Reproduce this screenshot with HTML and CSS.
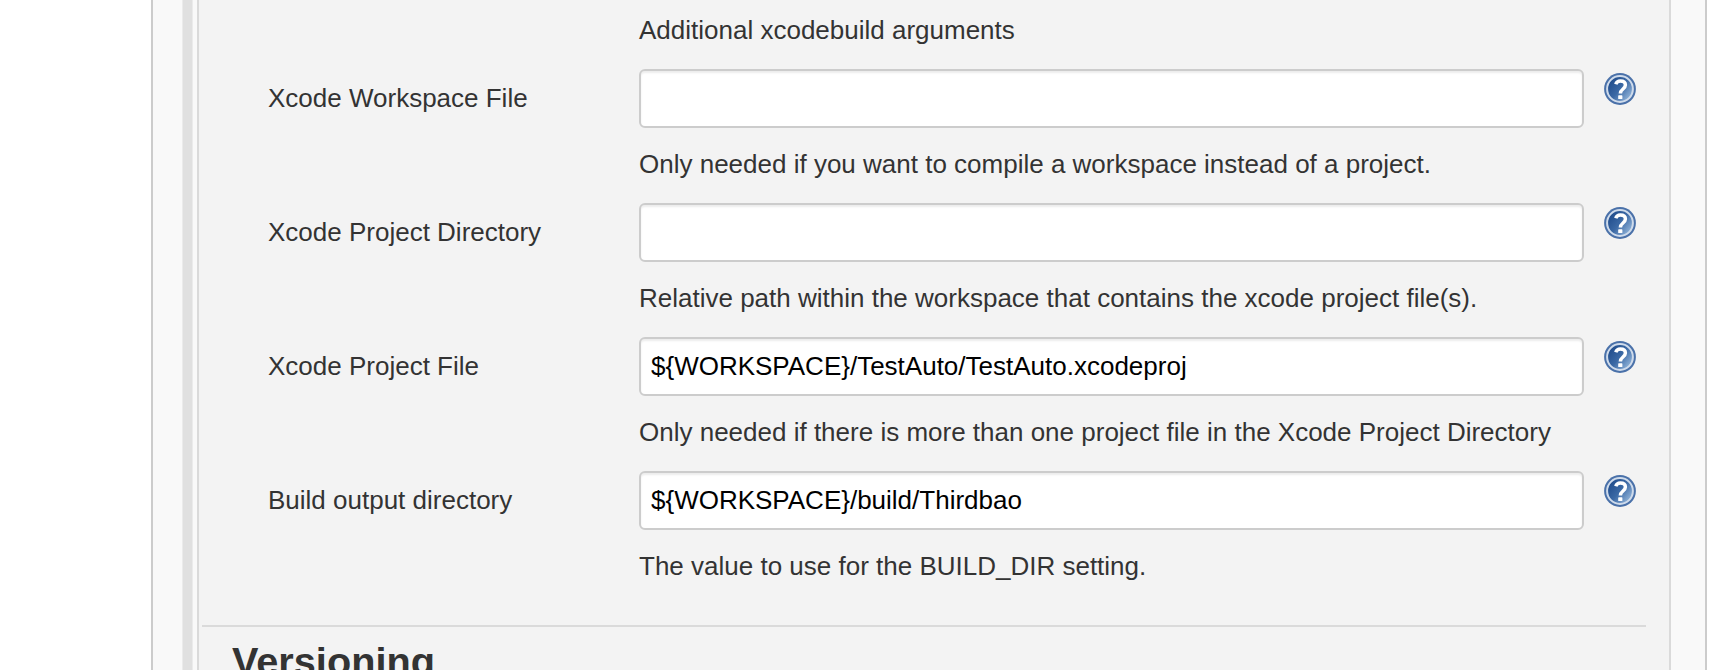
FILE: index.html
```html
<!DOCTYPE html>
<html lang="en">
<head>
<meta charset="utf-8">
<title>Xcode build configuration</title>
<link rel="stylesheet" href="styles.css">
</head>
<body>
<svg width="0" height="0" class="defs" aria-hidden="true">
  <defs>
    <linearGradient id="disc" x1="0" y1="0.1" x2="1" y2="0.9">
      <stop offset="0.15" stop-color="#24508f"/><stop offset="0.5" stop-color="#3b69a5"/><stop offset="0.9" stop-color="#8fb2d8"/>
    </linearGradient>
    <symbol id="help" viewBox="0 0 32 32">
      <circle cx="16" cy="16" r="15.9" fill="#4a71a9"/>
      <circle cx="16" cy="16" r="12.9" fill="url(#disc)" stroke="#cfdbeb" stroke-width="2"/>
      <path d="M11.8 11.3C12.500 8.900 14 8 16.300 8c3.100 0 5.100 1.400 5.100 4.100 0 4-5 3.900-5 8.400" fill="none" stroke="#fff" stroke-width="3.500"/>
      <rect x="14.200" y="22.300" width="4.200" height="3.700" rx="0.600" fill="#fff"/>
    </symbol>
  </defs>
</svg>
<main class="config">
  <div class="drag-handle"></div>
  <section class="panel">
    <p class="description intro">Additional xcodebuild arguments</p>
    <div class="row">
      <label class="label" for="workspace">Xcode Workspace File</label>
      <input class="field" id="workspace" type="text">
      <svg class="help"><use href="#help"/></svg>
      <p class="description">Only needed if you want to compile a workspace instead of a project.</p>
    </div>
    <div class="row">
      <label class="label" for="directory">Xcode Project Directory</label>
      <input class="field" id="directory" type="text">
      <svg class="help"><use href="#help"/></svg>
      <p class="description">Relative path within the workspace that contains the xcode project file(s).</p>
    </div>
    <div class="row">
      <label class="label" for="project">Xcode Project File</label>
      <input class="field" id="project" type="text" value="${WORKSPACE}/TestAuto/TestAuto.xcodeproj">
      <svg class="help"><use href="#help"/></svg>
      <p class="description">Only needed if there is more than one project file in the Xcode Project Directory</p>
    </div>
    <div class="row">
      <label class="label" for="output">Build output directory</label>
      <input class="field" id="output" type="text" value="${WORKSPACE}/build/Thirdbao">
      <svg class="help"><use href="#help"/></svg>
      <p class="description">The value to use for the BUILD_DIR setting.</p>
    </div>
    <h2 class="heading">Versioning</h2>
  </section>
</main>
</body>
</html>
```
FILE: styles.css
```css
* { box-sizing: border-box; }
body {
  margin: 0;
  height: 670px;
  overflow: hidden;
  background: #fff;
  color: #333;
  font: 26px/30px "Liberation Sans", Arial, sans-serif;
}
.defs { position: absolute; }
.config {
  display: flex;
  width: 1556px;
  height: 670px;
  margin-left: 151px;
  padding: 0 34px 0 29px;
  border: solid #ccc;
  border-width: 0 2px;
  background: #f9f9f9;
}
.drag-handle {
  width: 11px;
  margin-right: 4px;
  border: solid #ebebeb;
  border-width: 0 1px;
  background: #e0e0e0;
}
.panel {
  flex: 1;
  overflow: hidden;
  padding: 0 23px 0 3px;
  border: solid #dadada;
  border-width: 0 2px;
  background: #f3f3f3;
}
.description { margin: 0; white-space: nowrap; }
.intro { height: 69px; padding: 15px 0 0 437px; }
.row {
  display: grid;
  grid-template-columns: 371px 945px 52px;
  grid-template-rows: 59px 75px;
  margin-left: 66px;
}
.label { padding-top: 14px; white-space: nowrap; }
.field {
  width: 945px;
  height: 59px;
  padding: 0 10px 1px;
  border: 2px solid #ccc;
  border-radius: 6px;
  outline: 0;
  background: #fff;
  box-shadow: inset 0 2px 2px rgba(0, 0, 0, 0.075);
  color: #000;
  font: inherit;
}
.help { width: 32px; height: 32px; margin: 4px 0 0 20px; }
.row .description { grid-column: 2; padding-top: 21px; }
.heading {
  height: 60px;
  margin: 20px 0 0;
  padding: 12px 0 0 30px;
  border-top: 2px solid #dadada;
  font-size: 39.7px;
  line-height: 44px;
}
```
